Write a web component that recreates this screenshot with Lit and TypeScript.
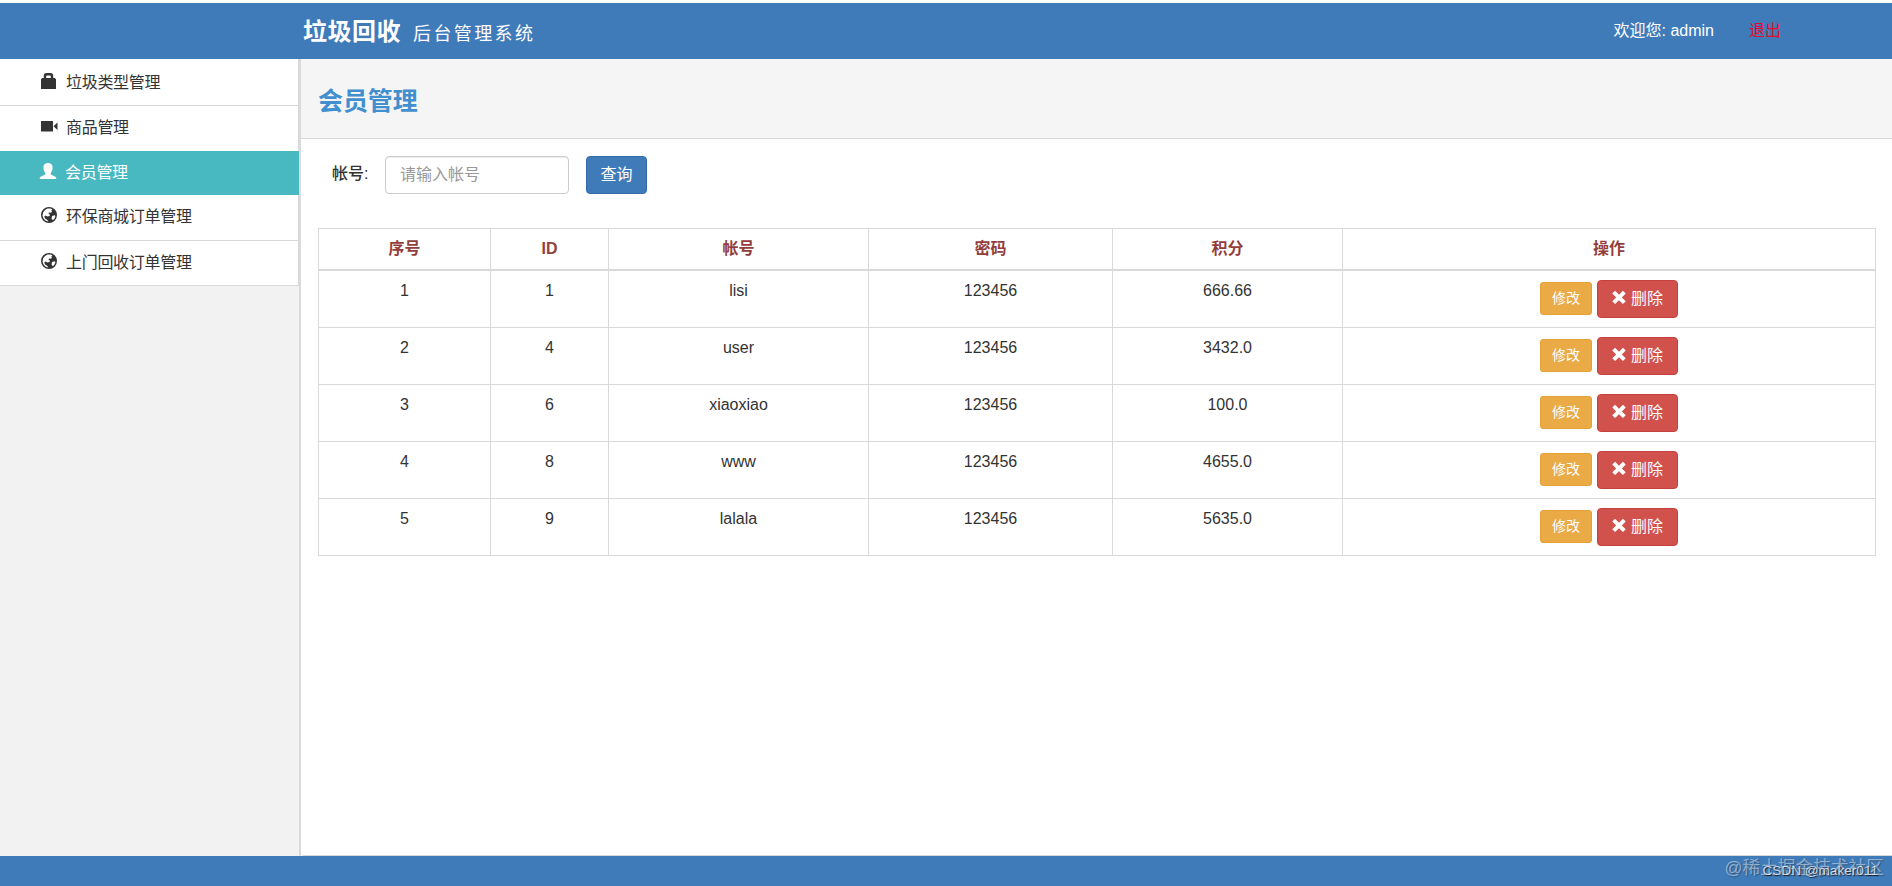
import { LitElement, html, css, svg } from "lit";
import { customElement } from "lit/decorators.js";
import { classMap } from "lit/directives/class-map.js";

const ICONS: Record<string, unknown> = {
  lock: svg`<path fill-rule="evenodd" d="M2.800 5V2.500C2.800.8 4 0 5.500 0h4c1.500 0 2.700.8 2.700 2.500V5h1.600L15 6.200V16H0V6.200L1.200 5zM5.200 5h4.600V3.200c0-.5-.3-.8-.8-.8H6c-.5 0-.8.3-.8.8z"/>`,
  video: svg`<path d="M0 3h12v10.500H0zM12.500 8.200L16.500 4.500V12z"/>`,
  user: svg`<path d="M8 0c2.900 0 4.600 1.700 4.600 4.500 0 2.500-.9 4-1.700 5.200-.5.900-.3 1.600.5 2l3.600 1.700c.9.500 1.300 1.200 1.300 2.600H-.3c0-1.400.4-2.100 1.300-2.600l3.600-1.700c.8-.4 1-1.100.5-2-.8-1.200-1.700-2.700-1.700-5.200C3.400 1.700 5.100 0 8 0z"/>`,
  globe: svg`<path fill-rule="evenodd" d="M8 0a8 8 0 1 1 0 16A8 8 0 0 1 8 0zM6.500 1.600L9.500 1.500 11.500 2.500 10.300 3.500 11 5 9.500 5.800 8 5.500 7.500 7 9 7.500 8.500 9 6.500 9.500 4.500 8.500 3.300 9.500 4 11.500 5.800 12.500 7.500 14.600 5 14 2.500 11.500 1.500 8.500 2.200 5.200 4 3zM11 9l2.800-.8.6.8-.8 2.500-1.800 1.700-1.300-1.700z"/>`,
  remove: svg`<path d="M3.500.8L8 5.300 12.500.8 15.700 4 11.200 8.500l4.500 4.300L12.500 16 8 11.600 3.500 16 .3 12.800 4.800 8.500.3 4z"/>`,
};

const MENU = [
  { icon: "lock", text: "垃圾类型管理" },
  { icon: "video", text: "商品管理" },
  { icon: "user", text: "会员管理", active: true },
  { icon: "globe", text: "环保商城订单管理" },
  { icon: "globe", text: "上门回收订单管理" },
];

const HEADERS = ["序号", "ID", "帐号", "密码", "积分", "操作"];

const MEMBERS = [
  ["1", "1", "lisi", "123456", "666.66"],
  ["2", "4", "user", "123456", "3432.0"],
  ["3", "6", "xiaoxiao", "123456", "100.0"],
  ["4", "8", "www", "123456", "4655.0"],
  ["5", "9", "lalala", "123456", "5635.0"],
];

@customElement("app-root")
export class AppRoot extends LitElement {
  static styles = css`
    :host { display: flex; flex-direction: column; height: 886px; box-sizing: border-box; padding-top: 3px; position: relative; overflow: hidden;
      background: #fff; color: #333; font: 16px/22px "Liberation Sans", "Noto Sans CJK SC", sans-serif; }
    * { box-sizing: border-box; }
    svg { display: block; fill: currentColor; overflow: visible; flex: none; }
    header { height: 56px; flex: none; background: #407bb9; color: #fff; display: flex; justify-content: space-between; padding: 0 111px 0 303px; }
    .brand { display: flex; align-items: baseline; padding-top: 15px; line-height: 28px; }
    .brand b { font-size: 24px; letter-spacing: .5px; }
    .brand span { font-size: 18px; letter-spacing: 2.4px; margin-left: 12px; }
    .account { display: flex; gap: 35px; padding-top: 17px; }
    .logout { color: #e60a28; }
    main { display: flex; flex: 1; min-height: 0; }
    aside { width: 301px; background: #f2f2f2; border-right: 2px solid #dadada; flex: none; }
    .item { height: 46px; display: flex; align-items: center; padding: 0 0 1px 41px; gap: 9px; letter-spacing: -.3px; background: #fff; border-bottom: 1px solid #d8d8d8; border-right: 1px solid #d8d8d8; }
    .item svg { margin-bottom: 4px; }
    .item:nth-child(1) { height: 47px; padding-top: 2px; }
    .item:nth-child(2) { height: 45px; border-bottom-color: #fff; }
    .item.active { height: 44px; background: #48b8c1; color: #fff; border-color: #48b8c1; padding-left: 40px; padding-bottom: 0; }
    .item:nth-child(5) { height: 45px; }
    section { flex: 1; border-bottom: 1px solid #d8d8d8; border-bottom-left-radius: 3px; }
    .title { height: 80px; background: #f5f5f5; border-bottom: 1px solid #d8d8d8; padding: 25px 17px 0; }
    h1 { margin: 0; font-size: 25px; line-height: 34px; letter-spacing: -.1px; color: #428fd0; }
    .search { display: flex; padding: 17px 0 0 31px; height: 89px; }
    label { font-weight: 500; width: 53px; padding-top: 7px; }
    input { width: 184px; height: 38px; border: 1px solid #ccc; border-radius: 4px; padding: 0 14px; font: inherit; box-shadow: inset 0 1px 1px rgba(0,0,0,.075); }
    input::placeholder { color: #999; opacity: 1; }
    button { font: inherit; color: #fff; border: 1px solid; border-radius: 4px; padding: 0; display: flex; align-items: center; justify-content: center; }
    .query { width: 61px; height: 38px; margin-left: 17px; background: #407bb9; border-color: #346ba6; }
    table { width: 1558px; margin-left: 17px; border-collapse: collapse; table-layout: fixed; }
    th, td { border: 1px solid #d9d9d9; text-align: center; vertical-align: top; padding: 9px 0 0; }
    th { color: #943e3c; height: 41px; border-bottom-width: 2px; font-weight: 700; }
    td { height: 57px; }
    tbody tr:first-child td { height: 58px; }
    .c0 { width: 172px; } .c1 { width: 118px; } .c2 { width: 260px; } .c3 { width: 244px; } .c4 { width: 230px; }
    .ops { display: flex; justify-content: center; align-items: center; gap: 5px; }
    .edit { width: 52px; height: 33px; margin-bottom: 1px; font-size: 14px; border-radius: 3px; background: #eaaa45; border-color: #e5a038; padding-bottom: 1px; }
    .del { width: 81px; height: 38px; gap: 5px; background: #d1524d; border-color: #c4413d; }
    .del svg { margin-bottom: 4px; }
    footer { height: 30px; flex: none; background: #407bb9; }
    .mark { position: absolute; right: 8px; bottom: 5px; font-size: 17.7px; line-height: 26px; color: rgba(255,255,255,.45); text-shadow: 1px 1px 1px rgba(0,0,0,.3); white-space: nowrap; }
    .mark.small { right: 14px; bottom: 5px; font-size: 13.6px; line-height: 20px; color: rgba(255,255,255,.75); text-shadow: 1px 1px 1px rgba(0,0,0,.7); }
  `;

  private icon(name: string, size = 16) {
    return html`<svg width=${size} height=${size} viewBox="0 0 16 16">${ICONS[name]}</svg>`;
  }

  render() {
    return html`
      <header>
        <div class="brand"><b>垃圾回收</b><span>后台管理系统</span></div>
        <div class="account"><span>欢迎您: admin</span><span class="logout">退出</span></div>
      </header>
      <main>
        <aside>
          ${MENU.map((m) => html`<div class=${classMap({ item: true, active: !!m.active })}>${this.icon(m.icon)}<span>${m.text}</span></div>`)}
        </aside>
        <section>
          <div class="title"><h1>会员管理</h1></div>
          <div class="search"><label>帐号:</label><input placeholder="请输入帐号" /><button class="query">查询</button></div>
          <table>
            <thead><tr>${HEADERS.map((h, i) => html`<th class="c${i}">${h}</th>`)}</tr></thead>
            <tbody>
              ${MEMBERS.map((row) => html`<tr>
                ${row.map((v) => html`<td>${v}</td>`)}
                <td><div class="ops"><button class="edit">修改</button><button class="del">${this.icon("remove", 14)}删除</button></div></td>
              </tr>`)}
            </tbody>
          </table>
        </section>
      </main>
      <footer></footer>
      <div class="mark">@稀土掘金技术社区</div>
      <div class="mark small">CSDN @maker011</div>
    `;
  }
}
